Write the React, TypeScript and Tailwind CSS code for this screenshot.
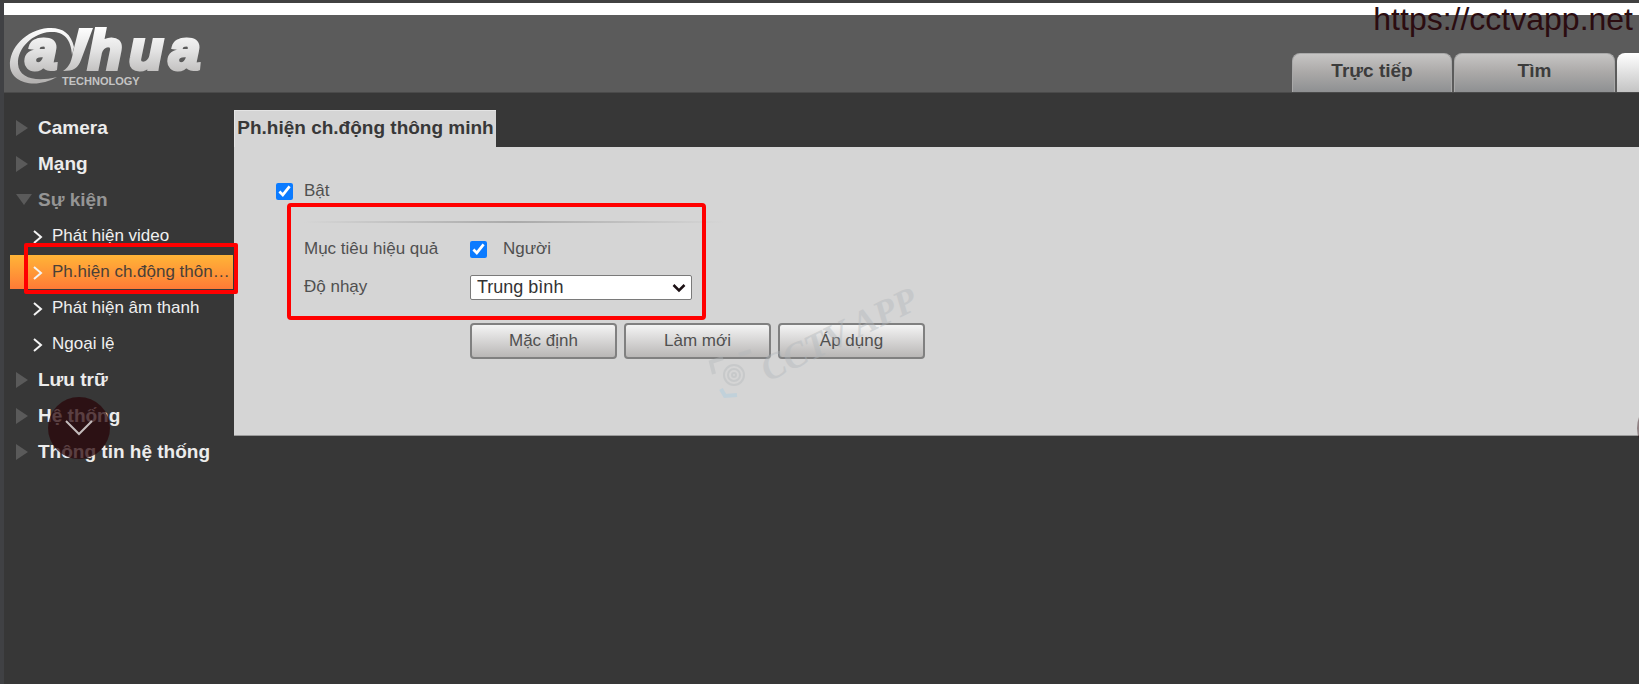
import React from 'react';

const menu = [
  { id: 'camera', name: 'Camera' },
  { id: 'network', name: 'Mạng' },
  {
    id: 'event',
    name: 'Sự kiện',
    open: true,
    items: [
      { id: 'video', name: 'Phát hiện video' },
      { id: 'smart', name: 'Ph.hiện ch.động thông minh', active: true },
      { id: 'audio', name: 'Phát hiện âm thanh' },
      { id: 'exception', name: 'Ngoại lệ' }
    ]
  },
  { id: 'storage', name: 'Lưu trữ' },
  { id: 'system', name: 'Hệ thống' },
  { id: 'info', name: 'Thông tin hệ thống' }
];

const buttons = ['Mặc định', 'Làm mới', 'Áp dụng'];

const Logo: React.FC = () => (
  <svg className="h-[76px] w-[212px]" viewBox="0 -6 212 76" role="img" aria-label="Dahua Technology">
    <defs>
      <linearGradient id="metal" gradientUnits="userSpaceOnUse" x1="0" y1="6" x2="0" y2="60">
        <stop offset="0" stopColor="#ffffff" />
        <stop offset="0.45" stopColor="#e2e2e2" />
        <stop offset="1" stopColor="#b4b2b1" />
      </linearGradient>
    </defs>
    <g fill="url(#metal)">
      <path d="M70 26 C67 12 58 6 44 7 C22 9 5 27 6 45 C7 61 30 69 53 56 C33 61 15 58 14 43 C13 27 29 12 46 11 C58 10 67 16 68 34 Z" />
      <path d="M75 7 H89 L77 39 C74 47 70 50 59 50 C66 46 68 38 69 31 Z" />
      <g fontFamily="'Liberation Sans', Arial, sans-serif" fontWeight="700" fontStyle="italic" fontSize="56" stroke="url(#metal)" strokeWidth="4">
        <text x="22" y="48">a</text>
        <text x="84" y="48">h</text>
        <text x="125" y="48">u</text>
        <text x="165" y="48">a</text>
      </g>
    </g>
    <text x="58" y="64" fill="#c4c4c4" fontFamily="'Liberation Sans', Arial, sans-serif" fontWeight="700" fontSize="11">
      TECHNOLOGY
    </text>
  </svg>
);

const Watermark: React.FC = () => (
  <svg
    className="pointer-events-none absolute top-[130px] left-[465px] h-[140px] w-[240px] opacity-40"
    viewBox="0 0 240 140"
    aria-hidden="true"
  >
    <g fill="none" stroke="#b4b8bb" strokeWidth="4">
      <path d="M15 97 L12 85 L24 81" />
      <path d="M40 78 L52 74" />
      <path d="M22 112 L26 119 L38 118" stroke="#a5cce2" />
      <circle cx="35" cy="98" r="10" strokeWidth="2" />
      <circle cx="35" cy="98" r="6" strokeWidth="2" />
      <circle cx="35" cy="98" r="2" strokeWidth="2" />
    </g>
    <text
      transform="translate(69 105) rotate(-26)"
      fill="#b0b6ba"
      fontFamily="'Liberation Serif', serif"
      fontStyle="italic"
      fontWeight="700"
      fontSize="36"
    >
      CCTV APP
    </text>
  </svg>
);

const Sidebar: React.FC = () => (
  <nav className="w-[230px] shrink-0 pt-[17px]">
    <ul>
      {menu.map((group) => (
        <li key={group.id}>
          <button
            type="button"
            className={`flex h-9 w-full items-center gap-1.5 pl-3 text-left text-[19px] font-bold whitespace-nowrap ${
              group.open ? 'text-[#959595]' : 'text-[#ececec]'
            }`}
          >
            <svg className="h-4 w-4 shrink-0" viewBox="0 0 16 16" fill="#5a5a5a" aria-hidden="true">
              {group.open ? <path d="M0 2 H16 L8 13 Z" /> : <path d="M0 0 L12 8 L0 16 Z" />}
            </svg>
            {group.name}
          </button>
          {group.items && (
            <ul>
              {group.items.map((item) => (
                <li key={item.id} className="relative py-px pl-1.5">
                  <a
                    href={`#${item.id}`}
                    className={`flex h-[34px] w-[223px] items-center gap-2 pl-[22px] text-[17px] ${
                      item.active
                        ? 'bg-linear-to-b from-[#ffb437] to-[#ff7a36] text-[#4a4038]'
                        : 'text-[#f0f0f0]'
                    }`}
                  >
                    <svg className="h-4 w-3 shrink-0" viewBox="0 0 12 16" fill="none" stroke="#f4f4f4" strokeWidth="2" aria-hidden="true">
                      <path d="M2 3 L9 9 L2 15" />
                    </svg>
                    <span className="truncate">{item.name}</span>
                  </a>
                  {item.active && (
                    <div className="pointer-events-none absolute -top-[11px] -right-1 -bottom-1 left-5 z-10 rounded-xs border-4 border-[#ff0000]" />
                  )}
                </li>
              ))}
            </ul>
          )}
        </li>
      ))}
    </ul>
  </nav>
);

export default function App() {
  return (
    <div className="relative flex min-h-screen flex-col overflow-hidden border-t-3 border-l-4 border-t-[#414141] border-l-[#404144] bg-[#373737] font-['Liberation_Sans',Arial,sans-serif]">
      {/* Header */}
      <div className="h-3 bg-white" />
      <header className="flex h-[78px] items-end justify-between border-b border-[#4a4a4a] bg-[#5b5b5b]">
        <div className="self-start">
          <Logo />
        </div>
        <div className="flex gap-0.5 text-[19px] font-bold text-[#3c3c3c]">
          <a
            href="#live"
            className="flex h-[39px] w-40 items-center justify-center rounded-t-lg border border-b-0 border-[#a9a9a9] bg-linear-to-b from-[#c6c5c4] via-[#aaa8a7] to-[#8e9092] pb-1"
          >
            Trực tiếp
          </a>
          <a
            href="#search"
            className="flex h-[39px] w-[161px] items-center justify-center rounded-t-lg border border-b-0 border-[#a9a9a9] bg-linear-to-b from-[#c6c5c4] via-[#aaa8a7] to-[#8e9092] pb-1"
          >
            Tìm
          </a>
          <div className="h-[39px] w-[22px] rounded-tl-lg bg-linear-to-b from-white to-[#c4c4c4]" />
        </div>
      </header>

      <div className="flex items-start">
        <Sidebar />

        {/* Smart motion detection */}
        <main className="min-w-0 grow pt-[17px]">
          <h1 className="flex h-[37px] w-[262px] items-center justify-center border-t border-l border-[#e4e4e4] bg-[#d5d5d5] pb-0.5 text-[19px] font-bold whitespace-nowrap text-[#383838]">
            Ph.hiện ch.động thông minh
          </h1>
          <form className="relative border-b border-b-[#9a9a9a] bg-[#d5d5d5] pt-8 pb-[76px] pl-[42px] text-[17px] text-[#505050]">
            <div className="flex h-6 items-center gap-[11px]">
              <input id="enable" type="checkbox" defaultChecked className="size-[17px] accent-[#0b7bff]" />
              <label htmlFor="enable">Bật</label>
            </div>

            <div className="relative ml-[11px] h-[117px] w-[419px] pt-[18px] pl-[17px]">
              <div className="h-0.5 w-[420px] bg-linear-to-r from-transparent via-[#aaaaaa] to-transparent" />
              <div className="mt-2.5 flex h-8 items-center">
                <span className="w-[166px]">Mục tiêu hiệu quả</span>
                <input id="human" type="checkbox" defaultChecked className="size-[17px] accent-[#0b7bff]" />
                <label htmlFor="human" className="pl-4">
                  Người
                </label>
              </div>
              <div className="mt-[7px] flex h-[30px] items-center">
                <label htmlFor="sensitivity" className="w-[166px]">
                  Độ nhạy
                </label>
                <div className="relative">
                  <select
                    id="sensitivity"
                    defaultValue="medium"
                    className="block h-[25px] w-[222px] appearance-none rounded-xs border border-[#7a7a7a] bg-white pl-1.5 text-[18px] leading-5 text-[#333333]"
                  >
                    <option value="low">Thấp</option>
                    <option value="medium">Trung bình</option>
                    <option value="high">Cao</option>
                  </select>
                  <svg
                    className="pointer-events-none absolute top-2 right-1.5 h-2.5 w-3.5"
                    viewBox="0 0 14 10"
                    fill="none"
                    stroke="#1c1014"
                    strokeWidth="2.5"
                    aria-hidden="true"
                  >
                    <path d="M1.5 2 L7 7.5 L12.5 2" />
                  </svg>
                </div>
              </div>
              <div className="pointer-events-none absolute inset-0 rounded-sm border-4 border-[#ff0000]" />
            </div>

            <div className="mt-[3px] flex gap-[7px] pl-[194px]">
              {buttons.map((name) => (
                <button
                  key={name}
                  type="button"
                  className="h-9 w-[147px] rounded-sm border-2 border-[#808080] bg-linear-to-b from-[#f4f4f4] to-[#b9b7b6]"
                >
                  {name}
                </button>
              ))}
            </div>
            <Watermark />
          </form>
        </main>
      </div>

      {/* Overlays */}
      <div className="pointer-events-none absolute top-0 right-1.5 text-[32px] leading-8 text-[#2b0c10]">
        https://cctvapp.net
      </div>
      <button
        type="button"
        aria-label="Cuộn xuống"
        className="absolute top-[394px] left-11 flex size-[62px] items-center justify-center rounded-full bg-[#290509]/75"
      >
        <svg className="h-4 w-7" viewBox="0 0 28 16" fill="none" stroke="#c4bcbc" strokeWidth="2" aria-hidden="true">
          <path d="M1 1 L14 14 L27 1" />
        </svg>
      </button>
      <div className="absolute top-[394px] -right-[60px] size-[62px] rounded-full bg-[#290509]/40" />
    </div>
  );
}
